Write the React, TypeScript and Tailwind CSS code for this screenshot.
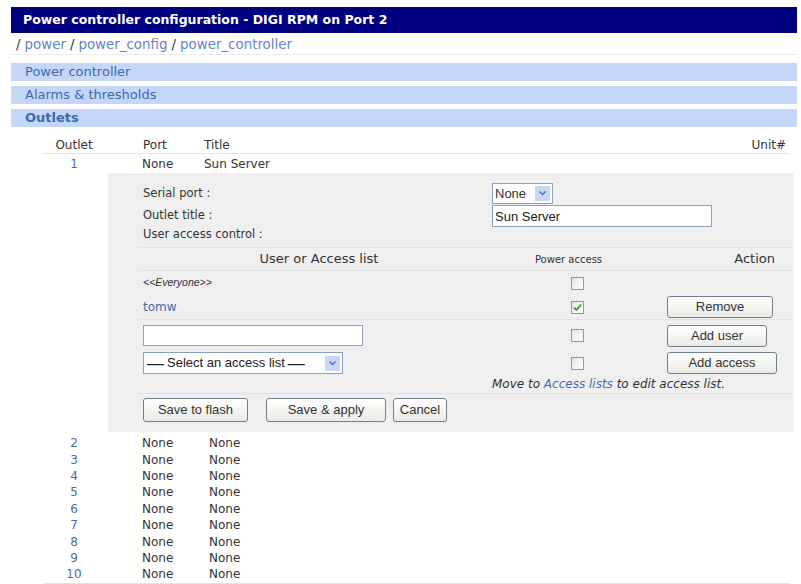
const Checkbox = ({ checked = false }: { checked?: boolean }) => (
  <span className="w-[13px] h-[13px] border border-[#8c9aa6] bg-gradient-to-br from-[#e6e6e6] to-white flex items-center justify-center">
    {checked && (
      <svg width="9" height="9" viewBox="0 0 9 9">
        <path d="M1 4.5 L3.5 7 L8 1.5" fill="none" stroke="#3a9a3a" strokeWidth="1.8" />
      </svg>
    )}
  </span>
);

const Button = ({ label, className }: { label: string; className: string }) => (
  <button
    className={`${className} border border-[#6f7f8e] rounded-[3px] bg-gradient-to-b from-white to-[#ebeae4] text-[#333] text-[13px] font-['Liberation_Sans'] flex items-center justify-center`}
  >
    {label}
  </button>
);

const DropArrow = () => (
  <span className="w-[15px] h-[15px] bg-[#c7d7f5] flex items-center justify-center mr-[2px]">
    <svg width="7" height="5" viewBox="0 0 7 5">
      <path d="M0.5 0.5 L3.5 3.5 L6.5 0.5" fill="none" stroke="#4a6fb5" strokeWidth="1.4" />
    </svg>
  </span>
);

const otherOutlets = [2, 3, 4, 5, 6, 7, 8, 9, 10];

export default function App() {
  return (
    <div className="w-[801px] h-[584px] bg-white overflow-hidden font-['DejaVu_Sans',sans-serif] text-[12px] text-[#333]">
      <div className="pt-[7px] pl-[11px] pr-[4px]">
        {/* Title bar */}
        <div className="h-[26px] bg-[#000080] text-white font-bold text-[12.5px] flex items-center pl-[12px]">
          Power controller configuration - DIGI RPM on Port 2
        </div>

        {/* Breadcrumb */}
        <div className="h-[22px] border-b border-[#ececec] flex items-center pt-[4px] pl-[5px] text-[13.4px] text-[#6485c8]">
          <span className="text-[#333]">/</span>
          <span className="ml-[4px]">power</span>
          <span className="mx-[4px] text-[#333]">/</span>
          <span>power_config</span>
          <span className="mx-[4px] text-[#333]">/</span>
          <span>power_controller</span>
        </div>

        {/* Section bars */}
        <div className="mt-[8px] flex flex-col gap-[5px] text-[13px] text-[#3c68b4]">
          <div className="h-[18px] bg-[#c5d7f7] flex items-center pl-[14px]">Power controller</div>
          <div className="h-[18px] bg-[#c5d7f7] flex items-center pl-[14px]">Alarms &amp; thresholds</div>
          <div className="h-[18px] bg-[#c5d7f7] flex items-center pl-[14px] font-bold">Outlets</div>
        </div>
      </div>

      {/* Outlets table */}
      <div className="ml-[43px] w-[747px] mt-[10px]">
        <div className="h-[17px] border-b border-[#e4e4e4] flex items-center">
          <span className="w-[62px] text-center">Outlet</span>
          <span className="w-[99px] pl-[38px]">Port</span>
          <span>Title</span>
          <span className="ml-auto pr-[4px]">Unit#</span>
        </div>
        <div className="h-[19px] flex items-center">
          <span className="w-[62px] text-center text-[#4a68b0]">1</span>
          <span className="w-[99px] pl-[37px]">None</span>
          <span>Sun Server</span>
        </div>

        {/* Edit panel */}
        <div className="ml-[65px] w-[685px] bg-[#efefef] pb-[10px]">
          <div className="pl-[35px] pt-[10px] text-[11.5px]">
            <div className="h-[21px] flex items-center">
              <span className="w-[349px]">Serial port :</span>
              <div className="w-[61px] h-[21px] border border-[#8aa0bd] bg-white flex items-center justify-between pl-[2px] font-['Liberation_Sans'] text-[13px]">
                None
                <DropArrow />
              </div>
            </div>
            <div className="h-[24px] flex items-center">
              <span className="w-[349px]">Outlet title :</span>
              <input
                readOnly
                defaultValue="Sun Server"
                className="w-[220px] h-[22px] border border-[#8aa0bd] bg-white px-[2px] font-['Liberation_Sans'] text-[13px] text-[#222] outline-none"
              />
            </div>
            <div className="h-[13px] flex items-center">User access control :</div>
          </div>

          {/* Access table */}
          <div className="ml-[30px] mt-[6px] border-t border-[#e2e2e2]">
            <div className="h-[23px] flex items-center border-b border-[#e2e2e2]">
              <span className="w-[362px] text-center text-[13px]">User or Access list</span>
              <span className="w-[155px] text-center text-[10px] pr-[18px]">Power access</span>
              <span className="flex-1 text-right pr-[18px] text-[13px]">Action</span>
            </div>
            <div className="h-[24px] flex items-center">
              <span className="w-[362px] pl-[5px] italic font-['Liberation_Sans'] text-[10.5px]">&lt;&lt;Everyone&gt;&gt;</span>
              <span className="w-[155px] flex justify-center">
                <Checkbox />
              </span>
            </div>
            <div className="h-[25px] flex items-center border-b border-[#e2e2e2]">
              <span className="w-[362px] pl-[5px] text-[#4a68b0] text-[12px]">tomw</span>
              <span className="w-[155px] flex justify-center">
                <Checkbox checked />
              </span>
              <span className="pl-[12px]">
                <Button label="Remove" className="w-[106px] h-[22px]" />
              </span>
            </div>
            <div className="h-[31px] flex items-center">
              <span className="w-[362px] pl-[5px]">
                <input
                  readOnly
                  className="w-[220px] h-[21px] border border-[#8aa0bd] bg-white outline-none"
                />
              </span>
              <span className="w-[155px] flex justify-center">
                <Checkbox />
              </span>
              <span className="pl-[12px]">
                <Button label="Add user" className="w-[100px] h-[22px]" />
              </span>
            </div>
            <div className="h-[24px] flex items-center">
              <span className="w-[362px] pl-[5px]">
                <div className="w-[200px] h-[22px] border border-[#8aa0bd] bg-white flex items-center justify-between pl-[3px] font-['Liberation_Sans'] text-[13px] text-[#222]">
                  <span className="flex items-center gap-[3px]">
                    <span className="text-[17px] leading-none">—</span>
                    Select an access list
                    <span className="text-[17px] leading-none">—</span>
                  </span>
                  <DropArrow />
                </div>
              </span>
              <span className="w-[155px] flex justify-center">
                <Checkbox />
              </span>
              <span className="pl-[12px]">
                <Button label="Add access" className="w-[110px] h-[22px]" />
              </span>
            </div>
            <div className="h-[19px] flex items-center border-b border-[#e2e2e2] pl-[354px] italic text-[12px]">
              Move to&nbsp;<span className="text-[#4a68b0]">Access lists</span>&nbsp;to edit access list.
            </div>
            <div className="pt-[4px] pl-[5px] flex">
              <Button label="Save to flash" className="w-[105px] h-[24px]" />
              <Button label="Save & apply" className="w-[120px] h-[24px] ml-[18px]" />
              <Button label="Cancel" className="w-[54px] h-[24px] ml-[7px]" />
            </div>
          </div>
        </div>

        {/* Remaining outlets */}
        <div className="mt-[3px] border-b border-[#e4e4e4]">
          {otherOutlets.map((n) => (
            <div key={n} className="h-[16.4px] flex items-center">
              <span className="w-[62px] text-center text-[#4a68b0]">{n}</span>
              <span className="w-[99px] pl-[37px]">None</span>
              <span className="pl-[5px]">None</span>
            </div>
          ))}
        </div>
      </div>
    </div>
  );
}
